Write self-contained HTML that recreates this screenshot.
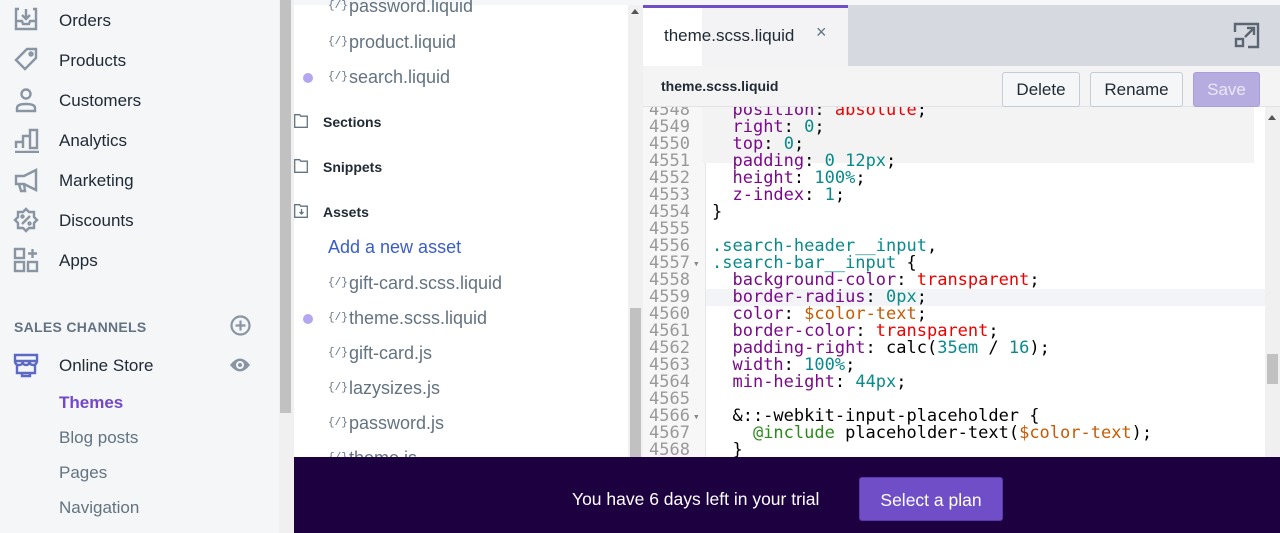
<!DOCTYPE html>
<html><head><meta charset="utf-8"><style>
*{margin:0;padding:0;box-sizing:border-box}
body{width:1280px;height:533px;overflow:hidden;position:relative;background:#f4f6f8;font-family:"Liberation Sans",sans-serif}
.a{position:absolute;white-space:nowrap}
.nav{left:59px;font-size:17px;color:#212b36}
.ic{left:13px;width:26px;height:26px}
.sub{left:59px;font-size:17px;color:#637381}
.f{left:349px;font-size:18px;color:#637381}
.fi{left:328px;font-size:11px;color:#637381;font-family:"Liberation Mono",monospace}
.dot{left:303px;width:10px;height:10px;border-radius:5px;background:#b4a6ef}
.fold{left:323px;font-size:14px;font-weight:bold;color:#212b36}
.fb{left:294px;width:15px;height:14px}
.code{left:643px;top:107px;width:622px;height:350px;background:#fff;overflow:hidden}
.ln{position:absolute;left:0;top:0;width:63px;height:100%;background:#f7f7f7;border-right:1px solid #e6e6e6}
pre{font-family:"DejaVu Sans Mono",monospace;font-size:17px;line-height:17px;position:absolute;top:-5px}
.p{color:#7a0a8a}.r{color:#e00}.t{color:#0a8a8a}.o{color:#c85a00}.g{color:#2b8a1e}.k{color:#000}
.btn{top:72px;height:35px;border:1px solid #c4cdd5;border-radius:3px;background:#f4f6f8;font-size:17px;color:#212b36;text-align:center;line-height:33px}
</style></head><body>
<svg class="a ic" style="top:6px" viewBox="0 0 26 26" fill="none" stroke="#8a95a3" stroke-width="2.4"><path d="M6 3H3v20h20V3h-3M3 15h6l1 3h6l1-3h6M13 3v10M9 9l4 4 4-4"/></svg>
<div class="a nav" style="top:11px">Orders</div>
<svg class="a ic" style="top:46px" viewBox="0 0 26 26" fill="none" stroke="#8a95a3" stroke-width="2.4"><path d="M3 14L14 3h9v9L12 23z"/><circle cx="18" cy="8" r="1.5"/></svg>
<div class="a nav" style="top:51px">Products</div>
<svg class="a ic" style="top:87px" viewBox="0 0 26 26" fill="none" stroke="#8a95a3" stroke-width="2.4"><circle cx="13" cy="7" r="4.5"/><path d="M4 24v-3q0-4 9-4t9 4v3z"/></svg>
<div class="a nav" style="top:91px">Customers</div>
<svg class="a ic" style="top:127px" viewBox="0 0 26 26" fill="none" stroke="#8a95a3" stroke-width="2.4"><path d="M2 25h24M3 21v-6h7v6M10 21V9h7v12M17 21V3h7v18z"/></svg>
<div class="a nav" style="top:131px">Analytics</div>
<svg class="a ic" style="top:167px" viewBox="0 0 26 26" fill="none" stroke="#8a95a3" stroke-width="2.4"><path d="M3 9h8l12-6v20l-12-6H3zM6 17l2 7h4l-1-7"/></svg>
<div class="a nav" style="top:171px">Marketing</div>
<svg class="a ic" style="top:207px" viewBox="0 0 26 26" fill="none" stroke="#8a95a3" stroke-width="2.4"><path d="M13 2l3 3h5v5l3 3-3 3v5h-5l-3 3-3-3H5v-5l-3-3 3-3V5h5z"/><path d="M9 17l8-8" /><circle cx="9.5" cy="9.5" r="1"/><circle cx="16.5" cy="16.5" r="1"/></svg>
<div class="a nav" style="top:211px">Discounts</div>
<svg class="a ic" style="top:247px" viewBox="0 0 26 26" fill="none" stroke="#8a95a3" stroke-width="2.4"><rect x="2" y="2" width="9" height="9"/><rect x="2" y="15" width="9" height="9"/><rect x="15" y="15" width="9" height="9"/><path d="M19.5 2v9M15 6.5h9"/></svg>
<div class="a nav" style="top:251px">Apps</div>
<div class="a" style="left:14px;top:319px;font-size:14px;font-weight:bold;color:#637381;letter-spacing:.3px">SALES CHANNELS</div>
<svg class="a" style="left:230px;top:315px" width="21" height="21" viewBox="0 0 21 21" fill="none" stroke="#8a95a3" stroke-width="2.2"><circle cx="10.5" cy="10.5" r="9"/><path d="M10.5 5.5v10M5.5 10.5h10"/></svg>
<svg class="a ic" style="top:352px" viewBox="0 0 26 26" fill="none" stroke="#5c6ac4" stroke-width="2.4"><path d="M2 3h22v6H2zM2 9q0 4 4 4t3.5-4q0 4 3.5 4t3.5-4q0 4 3.5 4t4-4M4 13v8h18v-8M9 21v3h8v-3"/></svg>
<div class="a nav" style="top:356px">Online Store</div>
<svg class="a" style="left:229px;top:357px" width="22" height="16" viewBox="0 0 22 16"><path d="M1 8q10-13 20 0q-10 13-20 0z" fill="#8a95a3"/><circle cx="11" cy="8" r="4" fill="#f4f6f8"/><circle cx="11" cy="8" r="2" fill="#8a95a3"/></svg>
<div class="a" style="left:59px;top:393px;font-size:17px;font-weight:bold;color:#7348c8">Themes</div>
<div class="a sub" style="top:428px">Blog posts</div>
<div class="a sub" style="top:463px">Pages</div>
<div class="a sub" style="top:498px">Navigation</div>
<div class="a" style="left:279px;top:0;width:15px;height:533px;background:#f0f0f0"></div>
<div class="a" style="left:280px;top:0;width:11px;height:413px;background:#c1c1c1"></div>
<div class="a" style="left:294px;top:5px;width:334px;height:452px;background:#fff"></div>
<div class="a" style="left:628px;top:5px;width:15px;height:452px;background:#f0f0f0"></div>
<div class="a" style="left:630px;top:308px;width:11px;height:149px;background:#c1c1c1"></div>
<div class="a" style="left:631px;top:9px;width:0;height:0;border:4px solid transparent;border-bottom:5px solid #555;border-top:0"></div>
<div class="a fi" style="top:0px">{/}</div><div class="a f" style="top:-4px">password.liquid</div>
<div class="a fi" style="top:36px">{/}</div><div class="a f" style="top:32px">product.liquid</div>
<div class="a dot" style="top:73px"></div><div class="a fi" style="top:71px">{/}</div><div class="a f" style="top:67px">search.liquid</div>
<svg class="a fb" style="top:114px" viewBox="0 0 15 14" fill="none" stroke="#637381" stroke-width="1.3"><path d="M.7 .7h5l1 1.5h6.6v11.1H.7z"/></svg><div class="a fold" style="top:114px">Sections</div>
<svg class="a fb" style="top:159px" viewBox="0 0 15 14" fill="none" stroke="#637381" stroke-width="1.3"><path d="M.7 .7h5l1 1.5h6.6v11.1H.7z"/></svg><div class="a fold" style="top:159px">Snippets</div>
<svg class="a fb" style="top:204px" viewBox="0 0 15 14" fill="none" stroke="#637381" stroke-width="1.3"><path d="M.7 .7h5l1 1.5h6.6v11.1H.7zM7.5 5v5M5.5 8l2 2 2-2"/></svg><div class="a fold" style="top:204px">Assets</div>
<div class="a" style="left:328px;top:237px;font-size:18px;color:#3a5ccc">Add a new asset</div>
<div class="a fi" style="top:277px">{/}</div><div class="a f" style="top:273px">gift-card.scss.liquid</div>
<div class="a dot" style="top:314px"></div><div class="a fi" style="top:312px">{/}</div><div class="a f" style="top:308px">theme.scss.liquid</div>
<div class="a fi" style="top:347px">{/}</div><div class="a f" style="top:343px">gift-card.js</div>
<div class="a fi" style="top:382px">{/}</div><div class="a f" style="top:378px">lazysizes.js</div>
<div class="a fi" style="top:417px">{/}</div><div class="a f" style="top:413px">password.js</div>
<div class="a fi" style="top:452px">{/}</div><div class="a f" style="top:448px">theme.js</div>
<div class="a" style="left:643px;top:5px;width:637px;height:61px;background:#d6d9e0"></div>
<div class="a" style="left:643px;top:5px;width:205px;height:61px;background:#fff;border-top:3px solid #6f4ec7"></div>
<div class="a" style="left:702px;top:8px;width:146px;height:58px;background:#f3f3f5"></div>
<div class="a" style="left:664px;top:26px;font-size:17px;color:#212b36">theme.scss.liquid</div>
<div class="a" style="left:816px;top:22px;font-size:18px;color:#637381">×</div>
<svg class="a" style="left:1233px;top:22px" width="28" height="27" viewBox="0 0 28 27" fill="none" stroke="#5c6673" stroke-width="2.4"><path d="M2 10V2h23v23H15"/><rect x="3" y="17" width="7" height="7"/><path d="M12 15l9-9M14 6h7v7"/></svg>
<div class="a" style="left:643px;top:66px;width:637px;height:41px;background:#f4f4f5;border-bottom:1px solid #dfe3e8"></div>
<div class="a" style="left:661px;top:78px;font-size:14px;font-weight:bold;color:#212b36">theme.scss.liquid</div>
<div class="a btn" style="left:1002px;width:78px">Delete</div>
<div class="a btn" style="left:1090px;width:93px">Rename</div>
<div class="a btn" style="left:1193px;width:67px;background:#b6ace0;border-color:#a99ede;color:#ece8f8">Save</div>
<div class="a code">
<div class="ln"></div>
<div class="a" style="left:59px;top:0;width:552px;height:56px;background:#f3f3f4"></div>
<div class="a" style="left:63px;top:182px;width:559px;height:17px;background:#f3f4f7"></div>
<pre style="left:6px;color:#999">4548
4549
4550
4551
4552
4553
4554
4555
4556
4557
4558
4559
4560
4561
4562
4563
4564
4565
4566
4567
4568</pre>
<pre style="left:50px;color:#888;font-size:11px;line-height:17px">









▾








▾</pre>
<pre style="left:69px" class="k">  <span class="p">position</span>: <span class="r">absolute</span>;
  <span class="p">right</span>: <span class="t">0</span>;
  <span class="p">top</span>: <span class="t">0</span>;
  <span class="p">padding</span>: <span class="t">0 12px</span>;
  <span class="p">height</span>: <span class="t">100%</span>;
  <span class="p">z-index</span>: <span class="t">1</span>;
}

<span class="t">.search-header__input</span>,
<span class="t">.search-bar__input</span> {
  <span class="p">background-color</span>: <span class="r">transparent</span>;
  <span class="p">border-radius</span>: <span class="t">0px</span>;
  <span class="p">color</span>: <span class="o">$color-text</span>;
  <span class="p">border-color</span>: <span class="r">transparent</span>;
  <span class="p">padding-right</span>: calc(<span class="t">35em</span> / <span class="t">16</span>);
  <span class="p">width</span>: <span class="t">100%</span>;
  <span class="p">min-height</span>: <span class="t">44px</span>;

  &amp;::-webkit-input-placeholder {
    <span class="g">@include</span> placeholder-text(<span class="o">$color-text</span>);
  }</pre>
</div>
<div class="a" style="left:1265px;top:107px;width:15px;height:350px;background:#f0f0f0"></div>
<div class="a" style="left:1267px;top:354px;width:11px;height:30px;background:#c1c1c1"></div>
<div class="a" style="left:1268px;top:115px;width:0;height:0;border:4px solid transparent;border-bottom:5px solid #555;border-top:0"></div>
<div class="a" style="left:294px;top:457px;width:986px;height:76px;background:#1c0040"></div>
<div class="a" style="left:572px;top:489px;font-size:17.5px;color:#fff">You have 6 days left in your trial</div>
<div class="a" style="left:859px;top:477px;width:144px;height:44px;background:#6f4ec7;border:1px solid #5a3aaa;border-radius:3px;color:#fff;font-size:17.5px;text-align:center;line-height:44px">Select a plan</div>
</body></html>
